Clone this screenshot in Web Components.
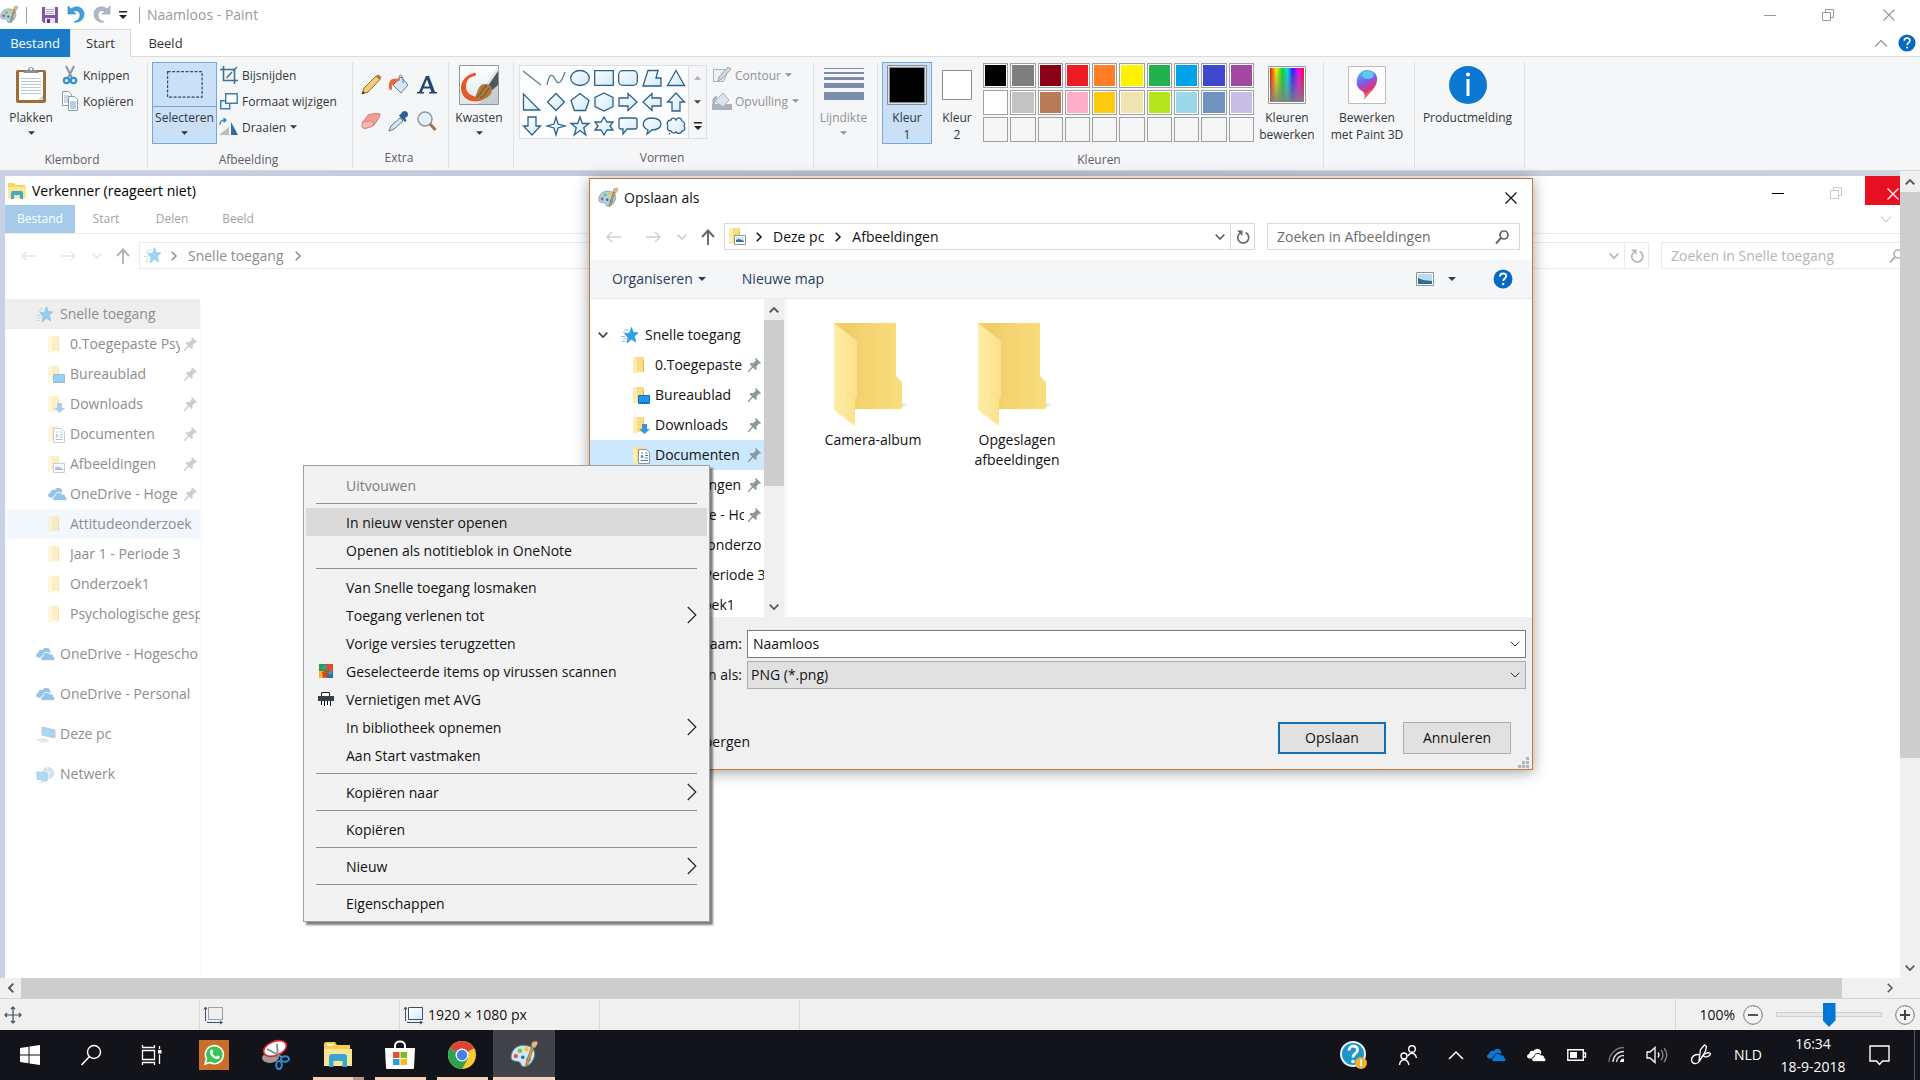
<!DOCTYPE html>
<html lang="nl">
<head>
<meta charset="utf-8">
<title>Naamloos - Paint</title>
<style>
  html, body { margin: 0; height: 100%; }
  body { overflow: hidden; font: 14px/20px "Open Sans", "Noto Sans", sans-serif; color: #111; background: #fff; }
</style>
</head>
<body>
<paint-app></paint-app>
<script>
const RESET = `*{box-sizing:border-box}
button,input,select{font:inherit;color:inherit;margin:0;padding:0;border:0;background:none;border-radius:0;outline:0;min-width:0}
button{display:block;text-align:inherit;white-space:nowrap}`;

/* Registers an element whose shadow root is cloned from a template. */
function define(name, css, html) {
  const fixed = typeof html === 'string' ? document.createElement('template') : null;
  if (fixed) fixed.innerHTML = `<style>${RESET}${css}</style>${html}`;
  customElements.define(name, class extends HTMLElement {
    connectedCallback() {
      if (this.shadowRoot) return;
      let t = fixed;
      if (!t) {
        t = document.createElement('template');
        t.innerHTML = `<style>${RESET}${css}</style>${html(this)}`;
      }
      this.attachShadow({ mode: 'open' }).append(t.content.cloneNode(true));
    }
  });
}

const SH = 'fill="url(#s)" stroke="#2f6285" stroke-width="1.3"';
const SG = '<defs><linearGradient id="s" x2="1" y2="1"><stop stop-color="#fff"/><stop offset="1" stop-color="#cfe9fb"/></linearGradient></defs>';
const SMALLF = '<path d="M0 1l4-1h7v15H4L0 16z" fill="#f9dc83"/><path d="M0 0l4 2v15l-4-2z" fill="#ffedb0"/><path d="M10 3h1v12h-1z" fill="#e3bb57"/>';
const CLOUD = (c, l) => `<path d="M2.500 10.500C-.8 10.300-.6 6.400 2.300 6 2.300 3.300 4.800 2.200 6.600 3.200 8-.3 13.200-.2 14.200 3.800L14 7 6 11z" fill="${c}"/><path d="M7.500 13.700C3.900 13.700 4 9.300 7 9 7.300 5.300 11.900 4.200 13.900 7 16.200 6.400 17.700 8.200 17.400 9.800 19.800 10.400 19.300 13.700 16.800 13.700z" fill="${c}" stroke="${l}" stroke-width="1"/>`;
const PAL = '<path d="M1 14C1 7 7 3 13 4c6 0 9 4 8 9s-5 9-9 9c-3 0-2-3-4-4S1 18 1 14z" fill="#a9d3ea" stroke="#5f8ea8" stroke-width=".8"/><circle cx="5" cy="13" r="1.900" fill="#e2574c"/><circle cx="8.500" cy="8.500" r="2" fill="#7fc04c"/><circle cx="14" cy="7" r="2" fill="#f4c63a"/><circle cx="11" cy="14" r="1.500" fill="#37688f"/><circle cx="16" cy="16" r="2" fill="#4aa0d8"/><path d="M21 4l-5.500 16-2 2.500.3-3.500L19 3z" fill="#d99346" stroke="#8d5a20" stroke-width=".5"/><path d="M18.500 4.500L19 1l4-1 1 2-2.500 4z" fill="#e2b98a" stroke="#98704a" stroke-width=".5"/>';
const ICONS = {
  palette: [24, 24, PAL],
  save: [18, 18, '<path d="M1 1h16v16H3l-2-2z" fill="#7d57a6"/><path d="M4 1h10v8H4z" fill="#f4f1f8"/><path d="M5 3.500h8M5 5.500h8M5 7.500h8" stroke="#b9aacb"/><path d="M4 12h10v5H4z" fill="#e5dff0"/><path d="M6 13h3v4H6z" fill="#5b3b85"/>'],
  undo: [18, 19, '<path d="M1 1v8h8L6 6.500c4-2 7 0 7 3.500s-3 6-6 7c6 1 10-3 10-8C17 3 10-1 4 4z" fill="#3da2dd" stroke="#2b7fb8" stroke-width=".6"/>'],
  redo: [18, 19, '<path d="M17 1v8H9l3-2.500c-4-2-7 0-7 3.500s3 6 6 7C5 18 1 14 1 9 1 3 8-1 14 4z" fill="#aeb9c8" stroke="#919eae" stroke-width=".6"/>'],
  more: [8, 8, '<path d="M0 0h8v1.500H0zM0 4h8L4 8z" fill="#222"/>'],
  tri: [8, 4, '<path d="M0 0h8L4 4z" fill="currentColor"/>'],
  triup: [8, 4, '<path d="M0 4h8L4 0z" fill="currentColor"/>'],
  min: [12, 12, '<path d="M0 6.500h12" stroke="currentColor" fill="none"/>'],
  max: [12, 12, '<path d="M.5 3.500h8v8h-8zM3.500 3V.5h8v8H9" stroke="currentColor" fill="none"/>'],
  close: [12, 12, '<path d="M.5.5l11 11M11.500.5l-11 11" stroke="currentColor" fill="none" stroke-width="1.200"/>'],
  up: [14, 8, '<path d="M1 7.500l6-6 6 6" stroke="currentColor" fill="none" stroke-width="1.400"/>'],
  down: [14, 8, '<path d="M1 .5l6 6 6-6" stroke="currentColor" fill="none" stroke-width="1.400"/>'],
  help: [20, 20, '<circle cx="10" cy="10" r="9.500" fill="#0669c4"/><path d="M7 7.500c0-4 6.200-4 6.200-.4 0 2.400-3 2.400-3 5" stroke="#fff" stroke-width="1.900" fill="none"/><circle cx="10.200" cy="15" r="1.200" fill="#fff"/>'],
  paste: [34, 38, '<rect x="2" y="4" width="30" height="33" rx="2" fill="#9c6d3a"/><path d="M5 6h24v28H5z" fill="#fff"/><path d="M7 12.500h20M7 15.500h20M7 18.500h20M7 21.500h20M7 24.500h20M7 27.500h20" stroke="#b5c8dc"/><path d="M9 7l3-3h2c0-4 6-4 6 0h2l3 3z" fill="#8a8f96"/><circle cx="17" cy="3" r="1.300" fill="#fff"/><path d="M24 34l5-5v5z" fill="#cfd6de"/>'],
  cut: [18, 20, '<path d="M5 1l6 12M13 1L7 13" stroke="#8b97a5" stroke-width="2" fill="none"/><circle cx="5.500" cy="15.500" r="2.700" fill="none" stroke="#2d93cf" stroke-width="2.200"/><circle cx="12.500" cy="15.500" r="2.700" fill="none" stroke="#2d93cf" stroke-width="2.200"/>'],
  copy: [18, 20, '<path d="M1.500.5h6l3 3v11h-9z" fill="#fff" stroke="#8b98a8"/><path d="M3 5h5M3 7h5M3 9h5M3 11h5" stroke="#9ab4ce"/><path d="M7.500 5.500h6l3 3v11h-9z" fill="#fff" stroke="#8b98a8"/><path d="M9 11h6M9 13h6M9 15h6M9 17h6" stroke="#6f9cc6"/>'],
  select: [36, 27, '<path d="M.6.600h34.500v25.500H.6z" fill="none" stroke="#23507f" stroke-width="1.200" stroke-dasharray="3 1.500"/>'],
  crop: [18, 18, '<path d="M3.500 0v14.500H18M0 3.500h14.500V18" stroke="#3b7392" stroke-width="1.600" fill="none"/><path d="M6.500 12L12 6M13 5l4-4" stroke="#3b7392" stroke-width="1.400"/>'],
  resize: [18, 18, '<path d="M.7 8.700h9v8h-9z" fill="#eef6fc" stroke="#3b7da8" stroke-width="1.400"/><path d="M5.700 1.700h11.500v9.500H5.700z" fill="#fff" stroke="#3b7da8" stroke-width="1.400"/>'],
  rotate: [20, 18, '<path d="M0 17L10 9v8z" fill="#b9bcc0"/><path d="M12 17V4l7 13z" fill="#2f6da5"/><path d="M1 7c0-4 2-5 5-5M4.500 0L7 2 4.500 4.500" stroke="#3b86c0" stroke-width="1.400" fill="none"/>'],
  pencil: [22, 22, '<path d="M2 20l2-6L16 2l4 3.500L8 18z" fill="#f2cf73" stroke="#8e6b2e"/><path d="M2 20l1-3 2 2z" fill="#333"/><path d="M16 2l4 3.500 1-2.500-2.500-2z" fill="#d2705f" stroke="#8e6b2e" stroke-width=".6"/>'],
  bucket: [22, 22, '<path d="M5 11l8-8 7 8-7 8z" fill="#d5e6f5" stroke="#5f7f9e"/><path d="M11 7V4c0-4 3-4 4 1v4" fill="none" stroke="#5f7f9e"/><path d="M12 5C4 3 0 6 1 14c.5 3 3 3 3 0-.3-3 1-4 4-5z" fill="#ec6a3a"/>'],
  textA: [22, 22, '<path d="M10 2h3l6 16h2v1.500h-8V18h2.200l-1-3.500H7.300L6 18h2v1.500H1V18h2zM8 12.500h5.500L11 5.500z" fill="#23446d"/>'],
  eraser: [22, 22, '<path d="M8 5c1-1 11-2 12-1s-4 9-6 11-10 4-11 3-1-4 0-6z" fill="#ef9f98" stroke="#c46d68" stroke-width=".8"/><path d="M2 12l10-1 2 4c-2 2-10 4-11 3s-1-4-1-6z" fill="#f4b9b2" stroke="#c46d68" stroke-width=".6"/>'],
  dropper: [22, 22, '<path d="M1 21l2-5 9-8 3 3-9 8z" fill="#d9e8f2" stroke="#587991"/><path d="M11 6l6 6 1.500-1.500L17 8c3-1 4-4 2-6s-5-1-6 2l-1 .5z" fill="#2d5f98"/>'],
  lens: [22, 22, '<circle cx="9" cy="9" r="7" fill="#e3f1fa" stroke="#8a99a8" stroke-width="1.500"/><path d="M14 14l5.500 6" stroke="#a5714a" stroke-width="3"/>'],
  brush: [40, 40, '<defs><linearGradient id="g" x2="0" y2="1"><stop stop-color="#fff"/><stop offset="1" stop-color="#dfe6ec"/></linearGradient></defs><path d="M.5.5h39v39H.5z" fill="url(#g)" stroke="#8f979e"/><path d="M39 39V18L26 34l-8 5z" fill="#b9c0c7" opacity=".7"/><path d="M15 8C4 11-1 21 4 30c3 6 12 8 20 5 2-1 2-3 0-3-9 1-17-3-17-10C7 15 10 12 16 11c2-1 1-4-1-3z" fill="#e4582b"/><path d="M27 21L39 5v15l-8 7z" fill="#4b5661"/><path d="M28 20L39 4" stroke="#dde3e8" stroke-width="2.500"/><path d="M15 33c4-3 3-15 12-14 6 1 8 6 4 11-4 5-12 6-16 3z" fill="#a97a3e"/><path d="M18 32c5-3 5-10 10-11M21 33c5-2 7-7 9-10" stroke="#6d4a20" fill="none"/>'],
  outline: [20, 18, '<path d="M1.500 3.500h15l-5 12h-10z" fill="#eef0f3" stroke="#a7b3c2"/><path d="M6 15l1-4L16 1l3 2-9 10z" fill="#d3d9e2" stroke="#9aa6b6"/>'],
  fill: [20, 18, '<path d="M0 12h20v6H0z" fill="#a9b3c4"/><path d="M3 9l8-8 6 7-6 7z" fill="#dde3ec" stroke="#a5b0c0"/><path d="M5 5C2 6 1 9 2 13" stroke="#a5b0c0" stroke-width="2.500" fill="none"/>'],
  lines: [40, 34, '<path d="M0 0h40v1H0zM0 4h40v2H0zM0 9h40v3H0zM0 15h40v5H0zM0 24h40v8H0z" fill="#7c8cab"/>'],
  sw1: [40, 40, '<path d="M.5.500h39v39H.5z" fill="#cfe2f6" stroke="#8c8c8c"/><path d="M2.500 2.500h35v35h-35z" fill="#000" stroke="#8c8c8c"/>'],
  sw2: [30, 30, '<path d="M.5.500h29v29H.5z" fill="#fff" stroke="#8c8c8c"/>'],
  rainbow: [38, 38, '<defs><linearGradient id="h"><stop stop-color="#f00"/><stop offset=".18" stop-color="#fe0"/><stop offset=".36" stop-color="#0d2"/><stop offset=".52" stop-color="#0de"/><stop offset=".66" stop-color="#22f"/><stop offset=".84" stop-color="#f0e"/><stop offset="1" stop-color="#f03"/></linearGradient><linearGradient id="v" x2="0" y2="1"><stop stop-color="#808080" stop-opacity="0"/><stop offset="1" stop-color="#808080" stop-opacity=".9"/></linearGradient></defs><path d="M.5.5h37v37H.5z" fill="#fff" stroke="#9a9a9a"/><path d="M2 2h34v34H2z" fill="url(#h)"/><path d="M2 2h34v34H2z" fill="url(#v)"/>'],
  p3d: [38, 38, '<defs><linearGradient id="a" x1=".2" x2=".6" y2="1"><stop stop-color="#45c4f5"/><stop offset=".4" stop-color="#7a5ce8"/><stop offset=".7" stop-color="#e3327c"/><stop offset="1" stop-color="#ffb02e"/></linearGradient></defs><path d="M.5.5h37v37H.5z" fill="#fdfdfd" stroke="#bdbdbd"/><path d="M19 4c7 0 11 5 10 11-1 7-7 11-13 19 1-5 1-7-2-9C9 22 8 18 9 13c1-5 5-9 10-9z" fill="url(#a)"/><ellipse cx="20" cy="9" rx="6" ry="4" fill="#5bdcf5" opacity=".8"/>'],
  info: [40, 40, '<circle cx="20" cy="20" r="19" fill="#0a78d1"/><circle cx="20" cy="9.500" r="2" fill="#fff"/><path d="M18.500 14h3v17h-3z" fill="#fff"/>'],
  /* shapes gallery */
  s0: [20, 20, '<path d="M1 3l18 14" stroke="#5e7f96" fill="none" stroke-width="1.300"/>'],
  s1: [20, 20, '<path d="M1 17C3 6 6 5 9 11s6 5 10-7" stroke="#5e7f96" fill="none" stroke-width="1.300"/>'],
  s2: [20, 20, `${SG}<ellipse cx="10" cy="10" rx="9.300" ry="7.500" ${SH}/>`],
  s3: [20, 20, `${SG}<path d="M.7 2.700h18.600v14.600H.7z" ${SH}/>`],
  s4: [20, 20, `${SG}<rect x=".7" y="2.700" width="18.600" height="14.600" rx="4" ${SH}/>`],
  s5: [20, 20, `${SG}<path d="M6 2.500h10L14 10h5v8H1z" ${SH}/>`],
  s6: [20, 20, `${SG}<path d="M10 2.500l8.500 15h-17z" ${SH}/>`],
  s7: [20, 20, `${SG}<path d="M1.500 2v16h16z" ${SH}/>`],
  s8: [20, 20, `${SG}<path d="M10 1.500l8.500 8.500-8.500 8.500L1.500 10z" ${SH}/>`],
  s9: [20, 20, `${SG}<path d="M10 1.500l9 7-3.500 10h-11L1 8.500z" ${SH}/>`],
  s10: [20, 20, `${SG}<path d="M10 1l9 4.500v9L10 19l-9-4.500v-9z" ${SH}/>`],
  s11: [20, 20, `${SG}<path d="M1 6h9V1.500l9 8.500-9 8.500V14H1z" ${SH}/>`],
  s12: [20, 20, `${SG}<path d="M19 6h-9V1.500L1 10l9 8.500V14h9z" ${SH}/>`],
  s13: [20, 20, `${SG}<path d="M6 19v-9H1.500L10 1l8.500 9H14v9z" ${SH}/>`],
  s14: [20, 20, `${SG}<path d="M6 1v9H1.500l8.500 9 8.500-9H14V1z" ${SH}/>`],
  s15: [20, 20, `${SG}<path d="M10 1l2 7 7 2-7 2-2 7-2-7-7-2 7-2z" ${SH}/>`],
  s16: [20, 20, `${SG}<path d="M10 1l2.300 6.500H19l-5.300 4.200L15.800 19 10 14.500 4.200 19l2.100-7.300L1 7.500h6.700z" ${SH}/>`],
  s17: [20, 20, `${SG}<path d="M10 1l3 5h6l-3 4 3 4h-6l-3 5-3-5H1l3-4-3-4h6z" ${SH}/>`],
  s18: [20, 20, `${SG}<path d="M3 2h14q2 0 2 2v7q0 2-2 2H9l-4 5v-5H3q-2 0-2-2V4q0-2 2-2z" ${SH}/>`],
  s19: [20, 20, `${SG}<path d="M6 14C-2 10 1 2 10 2c12 0 12 12 0 12l-5 4z" ${SH}/>`],
  s20: [20, 20, `${SG}<path d="M5 4c1-3 4-2 5 0 1-3 5-3 6 1 3 1 3 4 2 5 2 3 0 5-2 5-1 3-4 3-6 1-2 2-4 1-5-1-4 0-4-3-3-5-2-3 0-6 3-6zM4 17l-1 1.500" ${SH}/>`],
  /* navigation */
  back: [16, 12, '<path d="M15 6H1M6 1L1 6l5 5" stroke="currentColor" fill="none" stroke-width="1.400"/>'],
  fwd: [16, 12, '<path d="M1 6h14M10 1l5 5-5 5" stroke="currentColor" fill="none" stroke-width="1.400"/>'],
  upar: [14, 16, '<path d="M7 16V2M1 8l6-6.500L13 8" stroke="currentColor" fill="none" stroke-width="1.900"/>'],
  chd: [10, 6, '<path d="M.7.700L5 5 9.300.700" stroke="currentColor" fill="none" stroke-width="1.700"/>'],
  chdthin: [10, 6, '<path d="M.7.700L5 5 9.300.700" stroke="#333" fill="none" stroke-width="1"/>'],
  chu: [10, 6, '<path d="M.7 5.300L5 1l4.300 4.300" stroke="currentColor" fill="none" stroke-width="1.900"/>'],
  chr: [6, 10, '<path d="M.7.700L5 5 .7 9.300" stroke="currentColor" fill="none" stroke-width="1.500"/>'],
  chl: [6, 10, '<path d="M5.300.700L1 5l4.300 4.300" stroke="currentColor" fill="none" stroke-width="1.900"/>'],
  sub: [10, 18, '<path d="M.8 1l8 8-8 8" stroke="#222" fill="none" stroke-width="1.200"/>'],
  refresh: [14, 16, '<path d="M9.500 3.500a5.500 5.500 0 1 1-5.800.8" stroke="currentColor" fill="none" stroke-width="1.700"/><path d="M1 1.500h5.500V7z" fill="currentColor"/>'],
  find: [14, 14, '<circle cx="9" cy="5" r="4" stroke="currentColor" fill="none" stroke-width="1.700"/><path d="M6 8l-5 5.500" stroke="currentColor" stroke-width="2"/>'],
  star: [17, 17, '<path d="M10.500.5l1.800 5 4.700.3-3.700 3.400 1.500 5.800-4.500-2.800L6 16l1-5.500-3.300-3.700 4.800-.6z" fill="#29a3ea" stroke="#1b7fc4" stroke-width=".6"/><path d="M3 3h4M2 5.500h3M0 9.500h4M2 12h3M1 14.500h3" stroke="#7cc3ef"/>'],
  folder: [17, 17, SMALLF],
  desktop: [17, 17, SMALLF + '<path d="M5.500 8.500h11v8h-11z" fill="#1e98ee" stroke="#1470b8"/><path d="M7 15.500h8" stroke="#0c4f86" stroke-dasharray="1 1"/>'],
  download: [17, 17, SMALLF + '<path d="M9 7h5v5h3l-5.500 5L6 12h3z" fill="#3d93d6"/>'],
  document: [17, 17, SMALLF + '<path d="M5.500 2.500h8l3 3v11h-11z" fill="#fff" stroke="#8795a0"/><path d="M8 11l1-3 1 3M8 6h2M12 6h2M12 8.500h3M12 11h3M7.500 13.500H15" stroke="#3f88c0" fill="none"/>'],
  picture: [17, 17, SMALLF + '<path d="M5.500 7.500h11v9h-11z" fill="#fff" stroke="#8795a0"/><path d="M7 9h8v5H7z" fill="#cfe5f7"/><path d="M7 14v-2l3-1 5 2v1z" fill="#3d6d96"/>'],
  cloud: [19, 14, CLOUD('#1180d4', '#fff')],
  pc: [20, 17, '<path d="M6 1l13 3v8L6 9z" fill="#3da9e6" stroke="#6b8ba3"/><path d="M0 13l8-1 6 3-8 2z" fill="#c5ccd2"/>'],
  network: [19, 17, '<circle cx="12" cy="7" r="6" fill="#8fb9d4"/><path d="M8 4l4 3 5-1M11 1l2 6v5" stroke="#d6e8f3" fill="none"/><path d="M1 6l10 1v8L1 13z" fill="#46b1ee" stroke="#4c8fb8"/><path d="M3 16l5-1 2 1-4 1z" fill="#b8c3cc"/>'],
  pin: [13, 14, '<path d="M8 0l5 5-1 1-1-.5-2.500 3 .2 2.500-1 1L5 9.500 1 14l-1 0 0-1 4-4.500L1.500 6l1-1 2.500.2L8 2.500 7 1z" fill="#8d979e"/>'],
  view: [18, 14, '<path d="M.5.5h17v13H.5z" fill="#fff" stroke="#8795a0"/><path d="M2 2h14v10H2z" fill="#b8dcf3"/><path d="M2 6l5 2 9 1v3H2z" fill="#2f6c8e"/>'],
  explorer: [18, 18, '<path d="M0 1h6l2 2h9v13H0z" fill="#f7d667"/><path d="M0 5h18v11H0z" fill="#fce68f"/><path d="M3 17v-6q0-2 2-2h8q2 0 2 2v6h-3v-4H6v4z" fill="#3fa9c9"/>'],
  bigfolder: [68, 104, '<defs><linearGradient id="b"><stop stop-color="#eecb62"/><stop offset="1" stop-color="#fade7e"/></linearGradient><linearGradient id="f"><stop stop-color="#ffeda6"/><stop offset="1" stop-color="#fbe08a"/></linearGradient></defs><path d="M66 87l7-3-7-4z" fill="#e6e6e6"/><path d="M0 2h62v53l6 6v27H21L4 60z" fill="url(#b)"/><path d="M0 2l23 18v55l-2 3v27L0 89z" fill="url(#f)"/>'],
  avg: [16, 16, '<path d="M1 1h7v7H1z" fill="#2f9a48"/><path d="M8 1h7v7H8z" fill="#e14a2b"/><path d="M1 8h7v7H1z" fill="#f0b526"/><path d="M8 8h7v7H8z" fill="#2a6cb8"/><path d="M2 5l6-3 1 5zM9 10l5-3v5z" fill="#35a3a8"/><path d="M4 9l5-2 2 6-6 2z" fill="#c9472a"/>'],
  shred: [16, 16, '<path d="M3.500 1.500h8v4h-8z" fill="#fff" stroke="#222"/><path d="M0 5h16v5H0z" fill="#36404c"/><path d="M3 10h10v5H3z" fill="#fff"/><path d="M3.500 10v4M6.500 10v5M9.500 10v4M12.500 10v5" stroke="#111"/>'],
  grip: [12, 12, '<path d="M9 1h3v3H9zM9 5h3v3H9zM5 5h3v3H5zM9 9h3v3H9zM5 9h3v3H5zM1 9h3v3H1z" fill="#b4b4b4"/>'],
  /* status bar */
  move: [18, 18, '<path d="M9 1v16M1 9h16M7 3l2-2 2 2M7 15l2 2 2-2M3 7L1 9l2 2M15 7l2 2-2 2" stroke="#3c4f66" fill="none" stroke-width="1.200"/>'],
  selsize: [20, 18, '<path d="M4.500 1.500h14v12h-14z" fill="none" stroke="#3c4f66" stroke-dasharray="1 1"/><path d="M1.500 15V2M0 3.500L1.500 1 3 3.500M3 16.500h15M16 15l2.500 1.500L16 18" stroke="#3c4f66" fill="none"/>'],
  imgsize: [20, 18, `${SG}<path d="M4.500 1.500h14v12h-14z" fill="url(#s)" stroke="#3c4f66"/><path d="M1.500 15V2M0 3.500L1.500 1 3 3.500M3 16.500h15M16 15l2.500 1.500L16 18" stroke="#3c4f66" fill="none"/>`],
  minus: [20, 20, '<circle cx="10" cy="10" r="9.300" fill="#f4f4f4" stroke="#777"/><path d="M5 9h10v2H5z" fill="#555"/>'],
  plus: [20, 20, '<circle cx="10" cy="10" r="9.300" fill="#f4f4f4" stroke="#777"/><path d="M5 9h4V5h2v4h4v2h-4v4H9v-4H5z" fill="#444"/>'],
  /* taskbar */
  win: [20, 20, '<path d="M0 3l8.500-1.200v7.700H0zM9.500 1.600L20 0v9.500H9.500zM0 10.500h8.500v7.700L0 17zM9.500 10.500H20V20L9.500 18.400z" fill="#fff"/>'],
  tsearch: [20, 22, '<circle cx="13" cy="8" r="6.500" fill="none" stroke="#fff" stroke-width="1.400"/><path d="M8.500 12.500L.5 21" stroke="#fff" stroke-width="1.600"/>'],
  tview: [22, 20, '<path d="M1.500 5.500h12v9h-12z" fill="none" stroke="#fff" stroke-width="1.300"/><path d="M1.500 0v2.500h12V0M1.500 20v-2.500h12V20M18.500 1v3M18.500 9.500v9.500" fill="none" stroke="#fff" stroke-width="1.300"/><path d="M17 5h3.500v3.500H17z" fill="#fff"/>'],
  whats: [30, 30, '<path d="M0 0h30v30H0z" fill="#c96f2a"/><path d="M6 24l1.500-5a9 9 0 1 1 3.500 3.500z" fill="#37c453" stroke="#fff" stroke-width="1.600"/><path d="M11.500 10c2-1.500 2.500 0 3 2l-1 1.300c1 2 2 2.700 3.700 3.500l1.300-1.300c2 .5 3 1.500 2 2.500-4 3.500-12-4-9-8z" fill="#fff"/>'],
  snip: [30, 30, '<ellipse cx="9" cy="18" rx="8" ry="5" fill="#a39a9b"/><ellipse cx="14" cy="8.500" rx="12" ry="7" fill="#fff" stroke="#d8232a" stroke-width="1.600" transform="rotate(-22 14 8.500)"/><path d="M6 9l15 8M16 4l1 15" stroke="#8a8a8a" stroke-width="1.800"/><ellipse cx="24" cy="19" rx="4" ry="2.800" fill="none" stroke="#2b8ed6" stroke-width="2"/><ellipse cx="18" cy="25" rx="2.800" ry="4" fill="none" stroke="#2b8ed6" stroke-width="2"/>'],
  texplorer: [28, 26, '<path d="M0 2q0-2 2-2h9l2 3h13v20H0z" fill="#f3cb50"/><path d="M3 2h7v1.500H3z" fill="#fff"/><path d="M0 7h28v17H0z" fill="#fbe593"/><path d="M5 25V15q0-3 3-3h12q3 0 3 3v10h-4.500v-6h-9v6z" fill="#37a6d0"/>'],
  store: [30, 30, '<path d="M10 9V6c0-6 10-6 10 0v3" fill="none" stroke="#fff" stroke-width="2"/><path d="M0 8h30l-1 20q0 1-1 1H2q-1 0-1-1z" fill="#fff"/><path d="M8 12h6.500v6H8z" fill="#e5512b"/><path d="M15.500 12H22v6h-6.500z" fill="#7fba22"/><path d="M8 19h6.500v6H8z" fill="#2a9de0"/><path d="M15.500 19H22v6h-6.500z" fill="#fcb813"/>'],
  chrome: [28, 28, '<circle cx="14" cy="14" r="14" fill="#fbc934"/><path d="M14 14L1.900 7A14 14 0 0 1 26.100 7z" fill="#dc4437"/><path d="M1.900 7A14 14 0 0 0 14 28l6-10.500L14 14z" fill="#2fa14f"/><path d="M14 7h12.100L14 14z" fill="#dc4437"/><circle cx="14" cy="14" r="6.500" fill="#fff"/><circle cx="14" cy="14" r="5.200" fill="#4580ea"/>'],
  tpaint: [28, 28, `<g transform="scale(1.160)">${PAL.replace('#a9d3ea', '#cfe8f5')}</g>`],
  thelp: [28, 30, '<circle cx="13" cy="14" r="12" fill="#1c95cd" stroke="#e9f4fa" stroke-width="2"/><path d="M9 10.500c0-6 9-5.500 8.500-.3 0 3.300-4.500 3.300-4.500 7.300" fill="none" stroke="#fff" stroke-width="2.800"/><circle cx="13" cy="21.500" r="1.800" fill="#fff"/><circle cx="21" cy="23" r="6" fill="#f0b030"/><path d="M20.200 19.500h1.800v7h-1.800z" fill="#fff"/>'],
  people: [20, 22, '<circle cx="14" cy="5" r="3.300" fill="none" stroke="#fff" stroke-width="1.400"/><path d="M10 12c2-4 7-4 8.500 2M1.500 21c1-7 8-7 9.500 0" fill="none" stroke="#fff" stroke-width="1.400"/><circle cx="6" cy="12" r="3" fill="none" stroke="#fff" stroke-width="1.400"/>'],
  tup: [16, 9, '<path d="M1 8l7-7 7 7" fill="none" stroke="#fff" stroke-width="1.500"/>'],
  cloudb: [20, 15, CLOUD('#0a78d6', '#15151d')],
  cloudw: [20, 15, CLOUD('#fff', '#15151d')],
  battery: [20, 12, '<path d="M.8.800h15.500v10.400H.8zM16.500 4h2v4h-2" fill="none" stroke="#fff" stroke-width="1.400"/><path d="M3 3h7v6H3z" fill="#fff"/>'],
  wifi: [18, 18, '<path d="M1 16C1 8 8 1.500 16 1.500" fill="none" stroke="#777" stroke-width="1.300"/><path d="M5 16C5 10 10 5.500 16 5.500M8.500 16C9 12 12 9.500 16 9.500" fill="none" stroke="#ddd" stroke-width="1.300"/><path d="M12 16c0-2 2-3.500 4-3.500V16z" fill="#fff"/>'],
  sound: [22, 18, '<path d="M1 6h3l5-4.500v15L4 12H1z" fill="none" stroke="#fff" stroke-width="1.300"/><path d="M12 6.500q2 2.500 0 5" fill="none" stroke="#fff" stroke-width="1.300"/><path d="M15 4q4 5 0 10M18 2q5.500 7 0 14" fill="none" stroke="#888" stroke-width="1.300"/>'],
  pen: [22, 22, '<path d="M9 16.500l1.500-11L14.500 1l2 1.500L15.500 7l-5 8.500z" fill="none" stroke="#fff" stroke-width="1.300"/><path d="M10 11C6 9.500 1.500 12 1.500 16s6 5 8 1c1.500-3 3-6 6-7.500s6-.5 4.500 1.500-5 2.500-6.500 1" fill="none" stroke="#fff" stroke-width="1.300"/>'],
  notif: [22, 22, '<path d="M1 2h19v15h-6.500L10.500 20.500 7.500 17H1z" fill="none" stroke="#fff" stroke-width="1.400"/>'],
};
define('ui-icon', ':host{display:block;flex:none;line-height:0}svg{display:block;overflow:visible}', el => {
  const [w, h, body] = ICONS[el.getAttribute('name')], s = +el.getAttribute('size') || w;
  return `<svg width="${s}" height="${Math.round(h * s / w)}" viewBox="0 0 ${w} ${h}" aria-hidden="true">${body}</svg>`;
});
const I = (n, size) => `<ui-icon name="${n}"${size ? ` size="${size}"` : ''}></ui-icon>`;

/* ---------- Paint title bar and tabs ---------- */
define('paint-titlebar', `
:host{display:block;background:#fff}
.t{display:flex;align-items:center;height:29px;color:#9a9a9a}
.q{display:flex;align-items:center;gap:8px}
.sep{width:1px;height:16px;background:#a0a0a0}
.q .sep:first-of-type{margin-right:6px}
.q .sep:last-of-type{margin-left:4px}
.name{margin-left:7px}
.win{display:flex;margin-left:auto}
.win button{width:58px;height:28px;display:grid;place-items:center}
.win button:last-child{width:63px}
nav{display:flex;height:28px;font-size:13px;line-height:26px;color:#333}
nav button{text-align:center;border-bottom:1px solid #dadbdc}
.f{width:70px;background:#1979ca;color:#fff;border-color:#1979ca}
nav .on{width:61px;background:#f5f6f7;border:1px solid #dadbdc;border-bottom-color:#f5f6f7}
.b{width:69px}
.r{flex:1;display:flex;justify-content:flex-end;align-items:center;gap:10px;padding-right:4px;border-bottom:1px solid #dadbdc;color:#9a9a9a}
.r button{border:0}`, `
<div class="t"><div class="q">${I('palette', 18)}<span class="sep"></span><button aria-label="Opslaan">${I('save')}</button><button aria-label="Ongedaan maken">${I('undo')}</button><button aria-label="Opnieuw">${I('redo')}</button><button aria-label="Werkbalk aanpassen">${I('more')}</button><span class="sep"></span></div>
<span class="name">Naamloos - Paint</span>
<div class="win"><button aria-label="Minimaliseren">${I('min')}</button><button aria-label="Maximaliseren">${I('max')}</button><button aria-label="Sluiten">${I('close')}</button></div></div>
<nav><button class="f">Bestand</button><button class="on">Start</button><button class="b">Beeld</button><div class="r"><button aria-label="Lint samenvouwen">${I('up')}</button><button aria-label="Help">${I('help', 18)}</button></div></nav>`);

/* ---------- Ribbon ---------- */
define('ribbon-group', `
:host{display:flex;flex-direction:column;flex:none;border-right:1px solid #dfe1e4;margin-bottom:2px}
.c{display:flex;height:82px;padding-left:4px}
:host([center]) .c{justify-content:center;padding:0 4px 0 0}
.l{height:26px;line-height:32px;padding-right:3px;text-align:center;color:#5c5f66}`, el => `<div class="c"><slot></slot></div><div class="l">${el.getAttribute('label') || ''}</div>`);
define('big-button', `
:host{display:block;flex:none;width:54px}
button{width:100%;height:82px;display:flex;flex-direction:column;align-items:center;line-height:17px;border:1px solid transparent;text-align:center}
.i{height:44px;width:100%;display:grid;place-items:center;flex:none;border-bottom:1px solid transparent;margin-bottom:2px}
.a{height:17px;padding-top:5px}
:host([on]) button{background:#c9e0f7;border-color:#7ba7d7}
:host([split]) .i{border-color:#7ba7d7}
:host([off]){color:#8f9298}`, el => `<button><span class="i">${I(el.getAttribute('icon'))}</span><span><slot></slot></span>${el.hasAttribute('arrow') ? `<span class="a">${I('tri', 7)}</span>` : `<span>${el.getAttribute('second') || ''}</span>`}</button>`);
define('small-button', `
:host{display:block}
button{display:flex;align-items:center;height:26px;padding:0 3px;gap:4px}
.i{width:18px;display:flex;justify-content:center}
:host([off]){color:#8f9298}`, el => `<button><span class="i">${I(el.getAttribute('icon'))}</span><slot></slot>${el.hasAttribute('arrow') ? I('tri', 7) : ''}</button>`);
define('shape-gallery', `
:host{display:flex;height:74px;margin:3px 3px 0 1px}
.g{display:grid;grid-template-columns:repeat(7,24px);grid-auto-rows:24px;background:#fcfdfe;border:1px solid #dcdee2}
.g button,.s button{display:grid;place-items:center}
.s{display:grid;grid-template-rows:repeat(3,1fr);width:18px;border:1px solid #dcdee2;border-left:0;color:#444}
.s button:first-child{color:#aaa}`, `
<div class="g">${Array.from({ length: 21 }, (_, i) => `<button aria-label="Vorm ${i + 1}">${I('s' + i)}</button>`).join('')}</div>
<div class="s"><button aria-label="Omhoog">${I('triup', 7)}</button><button aria-label="Omlaag">${I('tri', 7)}</button><button aria-label="Meer">${I('more')}</button></div>`);
const COLORS = ['#000', '#7f7f7f', '#880015', '#ed1c24', '#ff7f27', '#fff200', '#22b14c', '#00a2e8', '#3f48cc', '#a349a4', '#fff', '#c3c3c3', '#b97a57', '#ffaec9', '#ffc90e', '#efe4b0', '#b5e61d', '#99d9ea', '#7092be', '#c8bfe7'];
define('color-palette', `
:host{display:grid;grid-template-columns:repeat(10,1fr);grid-auto-rows:25px;gap:2px;width:271px;margin:1px 2px 0 1px}
button{border:1px solid #a0a0a0;padding:1px;background:#fff content-box}
button.e{background:none}`, Array.from({ length: 30 }, (_, i) => `<button aria-label="Kleur ${i + 1}" ${COLORS[i] ? `style="background:linear-gradient(${COLORS[i]},${COLORS[i]}) content-box,#fff"` : 'class="e"'}></button>`).join(''));
define('paint-ribbon', `
:host{display:flex;height:114px;padding-top:5px;background:#f5f6f7;border-bottom:1px solid #d3d6da;font-size:12px;line-height:17px;color:#33363c;overflow:hidden}
.w1{width:148px}.w2{width:205px}.w3{width:96px}.w4{width:65px}.w5{width:300px}.w6{width:64px}.w7{width:446px}.w8{width:91px}.w9{width:110px}
.tools{display:grid;grid-template:36px 36px/repeat(3,28px);padding-top:5px}
.tools button{display:grid;place-items:center}
.k{width:50px}.sel{width:65px}.m{width:62px}.p{width:100%}`, `
<ribbon-group label="Klembord" class="w1"><big-button icon="paste" arrow>Plakken</big-button><div class="col"><small-button icon="cut">Knippen</small-button><small-button icon="copy">Kopiëren</small-button></div></ribbon-group>
<ribbon-group label="Afbeelding" class="w2"><big-button class="sel" icon="select" arrow on split>Selecteren</big-button><div class="col"><small-button icon="crop">Bijsnijden</small-button><small-button icon="resize">Formaat wijzigen</small-button><small-button icon="rotate" arrow>Draaien</small-button></div></ribbon-group>
<ribbon-group label="Extra" class="w3" center><div class="tools"><button aria-label="Potlood">${I('pencil')}</button><button aria-label="Opvullen">${I('bucket')}</button><button aria-label="Tekst">${I('textA')}</button><button aria-label="Gum">${I('eraser')}</button><button aria-label="Kleur kiezen">${I('dropper')}</button><button aria-label="Vergrootglas">${I('lens')}</button></div></ribbon-group>
<ribbon-group class="w4" center><big-button icon="brush" arrow>Kwasten</big-button></ribbon-group>
<ribbon-group label="Vormen" class="w5"><shape-gallery></shape-gallery><div class="col"><small-button icon="outline" arrow off>Contour</small-button><small-button icon="fill" arrow off>Opvulling</small-button></div></ribbon-group>
<ribbon-group class="w6" center><big-button icon="lines" arrow off>Lijndikte</big-button></ribbon-group>
<ribbon-group label="Kleuren" class="w7"><big-button class="k" icon="sw1" second="1" on>Kleur</big-button><big-button class="k" icon="sw2" second="2">Kleur</big-button><color-palette></color-palette><big-button class="m" icon="rainbow" second="bewerken">Kleuren</big-button></ribbon-group>
<ribbon-group class="w8" center><big-button class="p" icon="p3d" second="met Paint 3D">Bewerken</big-button></ribbon-group>
<ribbon-group class="w9" center><big-button class="p" icon="info">Productmelding</big-button></ribbon-group>`);

/* ---------- Shared pieces for file windows ---------- */
define('scroll-bar', `
:host{display:flex;background:#f0f0f0;color:#555}
:host([vertical]){flex-direction:column}
button{flex:none;width:21px;height:100%;display:grid;place-items:center}
:host([vertical]) button{width:100%;height:21px}
.trk{flex:1;display:flex;flex-direction:inherit}
.th{flex:0 0 var(--thumb,50%);background:#cdcdcd}`, el => {
  const v = el.hasAttribute('vertical');
  return `<button aria-label="Terug">${I(v ? 'chu' : 'chl')}</button><div class="trk"><div class="th"></div></div><button aria-label="Verder">${I(v ? 'chd' : 'chr')}</button>`;
});
define('nav-row', `
:host{display:flex;align-items:center;height:30px;padding-left:31px;flex:none}
:host([sub]){padding-left:43px}
:host([gap]){margin-top:10px}
:host([open]){padding-left:8px}
.c{width:23px;color:#444}
.i{width:17px;margin-right:7px;flex:none;display:flex;opacity:var(--icon-fade,1)}
:host([sub]) .i{margin-right:5px}
.t{flex:1;min-width:0;overflow:hidden;white-space:nowrap}
.p{flex:none;width:20px;padding-left:4px;opacity:var(--icon-fade,1)}`, el => `${el.hasAttribute('open') ? `<span class="c">${I('chd')}</span>` : ''}<span class="i">${I(el.getAttribute('icon'))}</span><span class="t"><slot></slot></span>${el.hasAttribute('pin') ? `<span class="p">${I('pin')}</span>` : ''}`);
define('address-bar', `
:host{display:flex;align-items:center;color:var(--glyph,#666)}
.n{display:flex;align-items:center}
.n button{display:grid;place-items:center;height:26px;width:39px}
.n .dim{color:var(--dim,#cfcfcf)}
.n .s{width:20px}.n .u{width:32px}
.box{flex:1;min-width:0;display:flex;align-items:center;height:var(--bar,27px);border:1px solid var(--line,#d9d9d9);padding-left:4px}
.crumbs{display:flex;align-items:center;gap:11px;flex:1;color:var(--ink,#111);padding-left:10px}
.crumbs ui-icon{color:var(--glyph,#666)}
.box>ui-icon{opacity:var(--icon-fade,1)}
.box button{height:100%;display:grid;place-items:center;width:20px}
.box .r{width:24px;border-left:1px solid var(--line,#d9d9d9)}
label{display:flex;align-items:center;width:253px;height:var(--bar,27px);margin-left:12px;border:1px solid var(--line,#d9d9d9);padding:0 10px 0 9px}
input{flex:1}
input::placeholder{color:var(--hint,#6d6d6d);opacity:1}`, el => `
<div class="n"><button class="dim" aria-label="Vorige">${I('back')}</button><button class="dim" aria-label="Volgende">${I('fwd')}</button><button class="dim s" aria-label="Recent">${I('chd')}</button><button class="u" aria-label="Omhoog">${I('upar')}</button></div>
<div class="box">${I(el.getAttribute('icon'))}<div class="crumbs"><slot></slot></div><button aria-label="Lijst">${I('chd')}</button><button class="r" aria-label="Vernieuwen">${I('refresh')}</button></div>
<label><input type="search" aria-label="${el.getAttribute('hint')}" placeholder="${el.getAttribute('hint')}">${I('find')}</label>`);

/* ---------- Explorer window ---------- */
define('explorer-window', `
:host{display:flex;flex-direction:column;background:#fff;color:#8d8d8d;overflow:hidden;--icon-fade:.45;--glyph:#b4b4b4;--dim:#e6e6e6;--line:#ebebeb;--ink:#8d8d8d;--hint:#b5b5b5}
header{display:flex;height:29px;align-items:center;color:#000;padding-left:3px}
header b{font-weight:400;margin-left:6px}
.w{display:flex;margin-left:auto;align-self:stretch}
.w button{width:58px;padding-top:5px;display:grid;place-items:center}
.w .m{color:#c9c9c9}
.w .x{width:35px;background:#e81123;color:#fff;padding:7px 0 0 20px}
nav{display:flex;align-items:center;height:29px;font-size:12px;border-bottom:1px solid #ededed;padding-right:8px;color:#a3a3a3}
nav button{width:66px;height:28px;text-align:center}
nav .f{width:70px;background:#a6cbea;color:#fff;margin-right:-2px}
nav ui-icon{margin-left:auto;color:#d0d0d0}
address-bar{margin:8px -14px 0 4px}
.side{width:196px;margin-top:30px;border-right:1px solid #fafafa;overflow:hidden;flex:1}
.on{background:#eee}.hov{background:#f2f8fd}`, `
<header>${I('explorer')}<b>Verkenner (reageert niet)</b><div class="w"><button aria-label="Minimaliseren">${I('min')}</button><button class="m" aria-label="Maximaliseren">${I('max')}</button><button class="x" aria-label="Sluiten">${I('close')}</button></div></header>
<nav><button class="f">Bestand</button><button>Start</button><button>Delen</button><button>Beeld</button>${I('down', 12)}</nav>
<address-bar icon="star" hint="Zoeken in Snelle toegang">${I('chr')}<span>Snelle toegang</span>${I('chr')}</address-bar>
<div class="side"><nav-row icon="star" class="on">Snelle toegang</nav-row><nav-row sub pin icon="folder">0.Toegepaste Psy</nav-row><nav-row sub pin icon="desktop">Bureaublad</nav-row><nav-row sub pin icon="download">Downloads</nav-row><nav-row sub pin icon="document">Documenten</nav-row><nav-row sub pin icon="picture">Afbeeldingen</nav-row><nav-row sub pin icon="cloud">OneDrive - Hoge</nav-row><nav-row sub icon="folder" class="hov">Attitudeonderzoek</nav-row><nav-row sub icon="folder">Jaar 1 - Periode 3</nav-row><nav-row sub icon="folder">Onderzoek1</nav-row><nav-row sub icon="folder">Psychologische gesp</nav-row><nav-row gap icon="cloud">OneDrive - Hogescho</nav-row><nav-row gap icon="cloud">OneDrive - Personal</nav-row><nav-row gap icon="pc">Deze pc</nav-row><nav-row gap icon="network">Netwerk</nav-row></div>`);

/* ---------- Save dialog ---------- */
define('folder-tile', `
:host{display:flex;flex-direction:column;align-items:center;width:144px;text-align:center;line-height:20px}
ui-icon{margin:0 10px 5px 0}
span{width:110px}`, `${I('bigfolder')}<span><slot></slot></span>`);
define('save-dialog', `
:host{display:flex;flex-direction:column;background:#f0f0f0;border:1px solid #c8773c;box-shadow:0 2px 14px rgba(0,0,0,.38)}
.top{background:#fff}
header{display:flex;align-items:center;height:36px;padding:1px 15px 0 8px}
header b{font-weight:400;margin-left:6px;flex:1}
address-bar{padding:8px 12px 10px 4px}
.bar{display:flex;align-items:center;height:39px;background:#f4f6f8;border-bottom:1px solid #e7e9eb;padding:0 19px 0 22px;color:#2b3f5c}
.bar button{display:flex;align-items:center;gap:5px}
.bar .n{margin-left:36px}
.bar .v{margin-left:auto;gap:14px;margin-right:37px}
.mid{display:flex;height:318px;background:#fff}
.side{width:174px;padding-top:21px;overflow:hidden;display:flex;flex-direction:column}
.on{background:#cce8ff}
scroll-bar{width:20px;--thumb:60%}
.files{flex:1;display:flex;padding:22px 0 0 14px;border-left:3px solid #f7f7f7;align-items:flex-start}
.form{display:grid;grid-template-columns:152px 1fr;column-gap:5px;row-gap:3px;padding:13px 6px 0 0;align-items:center}
.form label{text-align:right;white-space:nowrap}
.f{display:flex;align-items:center;height:28px;border:1px solid #7a7a7a;background:#fff;padding:0 5px}
.f input{flex:1}
.f.s{border-color:#adadad;background:#e1e1e1;padding:0;position:relative}
select{appearance:none;flex:1;height:100%;padding:0 20px 0 3px}
.s ui-icon{position:absolute;right:5px;pointer-events:none}
footer{display:flex;align-items:center;justify-content:flex-end;gap:17px;padding:33px 21px 0 0}
.hide{margin-right:auto;width:160px;text-align:right;padding-top:8px}
.b{width:108px;height:32px;text-align:center;background:#e1e1e1;border:1px solid #adadad}
.b.p{border:2px solid #0f6fb8}
.g{display:flex;justify-content:flex-end;padding:2px 3px 1px}`, `
<div class="top"><header>${I('palette', 20)}<b>Opslaan als</b><button aria-label="Sluiten">${I('close')}</button></header>
<address-bar icon="picture" hint="Zoeken in Afbeeldingen">${I('chr')}<span>Deze pc</span>${I('chr')}<span>Afbeeldingen</span></address-bar>
<div class="bar"><button>Organiseren ${I('tri')}</button><button class="n">Nieuwe map</button><button class="v" aria-label="Weergave">${I('view')}${I('tri')}</button><button aria-label="Help">${I('help')}</button></div></div>
<div class="mid"><div class="side"><nav-row open icon="star">Snelle toegang</nav-row><nav-row sub pin icon="folder">0.Toegepaste</nav-row><nav-row sub pin icon="desktop">Bureaublad</nav-row><nav-row sub pin icon="download">Downloads</nav-row><nav-row sub pin icon="document" class="on">Documenten</nav-row><nav-row sub pin icon="picture">Afbeeldingen</nav-row><nav-row sub pin icon="cloud">OneDrive - Ho</nav-row><nav-row sub icon="folder">Attitudeonderzo</nav-row><nav-row sub icon="folder">Jaar 1 - Periode 3</nav-row><nav-row sub icon="folder">Onderzoek1</nav-row></div><scroll-bar vertical></scroll-bar><div class="files"><folder-tile>Camera-album</folder-tile><folder-tile>Opgeslagen afbeeldingen</folder-tile></div></div>
<div class="form"><label for="name">Bestandsnaam:</label><div class="f"><input id="name" value="Naamloos">${I('chdthin')}</div><label for="type">Opslaan als:</label><div class="f s"><select id="type"><option>PNG (*.png)</option></select>${I('chdthin')}</div></div>
<footer><button class="hide">Mappen verbergen</button><button class="b p">Opslaan</button><button class="b">Annuleren</button></footer><div class="g">${I('grip')}</div>`);

/* ---------- Context menu ---------- */
define('menu-item', `
:host{display:block}
button{width:100%;height:28px;display:flex;align-items:center;padding-right:10px}
:host([on]) button{background:#dadada}
:host([off]){color:#7d7d7d}
.i{width:40px;padding-left:12px;flex:none}
.t{flex:1;padding-top:2px}`, el => `<button role="menuitem"><span class="i">${el.hasAttribute('icon') ? I(el.getAttribute('icon')) : ''}</span><span class="t"><slot></slot></span>${el.hasAttribute('sub') ? I('sub') : ''}</button>`);
define('context-menu', `
:host{display:block;background:#f2f2f2;border:1px solid #a0a0a0;padding:5px 2px 4px;box-shadow:3px 3px 2px rgba(0,0,0,.5)}
hr{margin:4px 10px;height:1px;border:0;background:#919191}`, `
<menu-item off>Uitvouwen</menu-item><hr><menu-item on>In nieuw venster openen</menu-item><menu-item>Openen als notitieblok in OneNote</menu-item><hr><menu-item>Van Snelle toegang losmaken</menu-item><menu-item sub>Toegang verlenen tot</menu-item><menu-item>Vorige versies terugzetten</menu-item><menu-item icon="avg">Geselecteerde items op virussen scannen</menu-item><menu-item icon="shred">Vernietigen met AVG</menu-item><menu-item sub>In bibliotheek opnemen</menu-item><menu-item>Aan Start vastmaken</menu-item><hr><menu-item sub>Kopiëren naar</menu-item><hr><menu-item>Kopiëren</menu-item><hr><menu-item sub>Nieuw</menu-item><hr><menu-item>Eigenschappen</menu-item>`);

/* ---------- Status bar and taskbar ---------- */
define('status-bar', `
:host{display:flex;align-items:stretch;height:32px;background:#f0f0f0;border-top:1px solid #d5d5d5}
.c{width:200px;display:flex;align-items:center;gap:4px;padding:0 4px;border-right:1px solid #d9d9d9;margin-top:1px}
.c:first-child{padding-left:2px}
.z{display:flex;align-items:center;margin-left:auto;border-left:1px solid #d9d9d9;padding:0 5px 0 23px}
.z>button:first-of-type{margin-left:8px}
input{appearance:none;width:106px;height:24px;margin:0 13px 0 13px}
input::-webkit-slider-runnable-track{height:5px;border:1px solid #cfcfcf;background:#e8e8e8}
input::-webkit-slider-thumb{appearance:none;width:13px;height:24px;margin-top:-10px;background:#0078d7;clip-path:polygon(0 0,100% 0,100% 72%,50% 100%,0 72%)}`, `
<div class="c">${I('move')}</div><div class="c">${I('selsize')}</div><div class="c">${I('imgsize')}<span>1920 × 1080 px</span></div><div class="c"></div>
<div class="z"><span>100%</span><button aria-label="Uitzoomen">${I('minus')}</button><input type="range" aria-label="Zoomen" value="50"><button aria-label="Inzoomen">${I('plus')}</button></div>`);
define('task-button', `
:host{display:block;width:62px}
button{width:100%;height:50px;display:grid;place-items:center;position:relative}
:host([narrow]){width:61px}
:host([narrow]) button{padding-right:2px}
:host([run]) button::after{content:"";position:absolute;left:6px;right:5px;bottom:0;height:3px;background:#f6d2bd}
:host([on]) button{background:#42424b}
:host([on]) button::after{left:0;right:0}
:host([multi]) button::after{background:linear-gradient(90deg,#f6d2bd 40px,#b39a8d 0)}`, el => `<button aria-label="${el.getAttribute('title')}">${I(el.getAttribute('icon'))}</button>`);
define('task-bar', `
:host{display:flex;height:50px;background:#13131a;color:#fff}
.tray{display:flex;margin-left:auto}
.tray button{width:40px;height:50px;display:grid;place-items:center;text-align:center}
.tray .w{width:54px}.tray .k{width:48px}.tray .u{width:42px}.tray .m{width:46px}
.tray .clock{width:84px;line-height:23px;align-content:center}
.tray .n{width:49px}
.e{width:1px;background:#55555c;margin:0 5px 0 10px}`, `
<task-button narrow title="Start" icon="win"></task-button><task-button narrow title="Zoeken" icon="tsearch"></task-button><task-button narrow title="Taakweergave" icon="tview"></task-button><task-button title="WhatsApp" icon="whats"></task-button><task-button title="Knipprogramma" icon="snip"></task-button><task-button run multi title="Verkenner" icon="texplorer"></task-button><task-button run title="Store" icon="store"></task-button><task-button run title="Chrome" icon="chrome"></task-button><task-button run on title="Paint" icon="tpaint"></task-button>
<div class="tray"><button class="w" aria-label="Hulp">${I('thelp')}</button><button class="w" aria-label="Personen">${I('people')}</button><button class="u" aria-label="Meer pictogrammen">${I('tup')}</button><button aria-label="OneDrive">${I('cloudb')}</button><button aria-label="OneDrive persoonlijk">${I('cloudw')}</button><button aria-label="Accu">${I('battery')}</button><button aria-label="Wifi">${I('wifi')}</button><button aria-label="Volume">${I('sound')}</button><button class="k" aria-label="Pen">${I('pen')}</button><button class="m">NLD</button><button class="clock"><span>16:34</span><span>18-9-2018</span></button><button class="n" aria-label="Meldingen">${I('notif')}</button><span class="e"></span></div>`);

/* ---------- Page ---------- */
define('paint-app', `
:host{display:flex;flex-direction:column;height:100vh}
main{flex:1;min-height:0;display:flex}
.canvas{flex:1;min-width:0;position:relative;background:linear-gradient(90deg,#c9d2e2,#bcc5d6 50%,#cbd3e2);z-index:1}
explorer-window{position:absolute;inset:5px 0 0 5px}
save-dialog{position:absolute;left:589px;top:7px;width:944px}
context-menu{position:absolute;left:303px;top:294px;width:407px}
.v{width:20px;--thumb:74%}
.h{height:20px;margin-right:20px;--thumb:98%}
.hw{background:#f0f0f0}
status-bar,task-bar,paint-titlebar,paint-ribbon,.hw{flex:none}`, `
<paint-titlebar></paint-titlebar><paint-ribbon></paint-ribbon>
<main><div class="canvas"><explorer-window></explorer-window><save-dialog></save-dialog><context-menu role="menu"></context-menu></div><scroll-bar class="v" vertical></scroll-bar></main>
<div class="hw"><scroll-bar class="h"></scroll-bar></div>
<status-bar></status-bar><task-bar></task-bar>`);
</script>
</body>
</html>
